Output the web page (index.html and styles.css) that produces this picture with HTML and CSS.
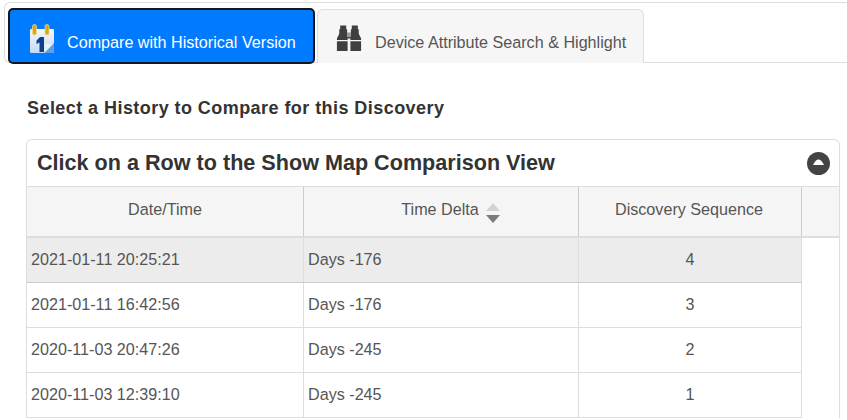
FILE: index.html
```html
<!DOCTYPE html>
<html lang="en">
<head>
<meta charset="utf-8">
<title>Compare with Historical Version</title>
<link rel="stylesheet" href="styles.css">
</head>
<body>
<nav class="tabs">
  <a class="tab tab-active">
    <svg class="tab-icon" width="25" height="29" viewBox="0 0 25 29">
      <defs>
        <linearGradient id="cal" x1="0" y1="0" x2="0" y2="1"><stop offset="0" stop-color="#f4f8fd"/><stop offset="1" stop-color="#c4daf2"/></linearGradient>
      </defs>
      <rect x="1" y="5" width="24" height="24" rx="1" fill="url(#cal)"/>
      <path d="M15 29 L25 19 V28 A1 1 0 0 1 24 29 Z" fill="#5d9fe0"/>
      <path d="M15.500 20 H24 L15.500 28.500 Z" fill="#e6f1fb"/>
      <rect x="3.500" y="0.500" width="4" height="10.500" rx="2" fill="#d9a520" stroke="#f2d472" stroke-width=".8"/>
      <rect x="16" y="0.500" width="4" height="10.500" rx="2" fill="#d9a520" stroke="#f2d472" stroke-width=".8"/>
      <path d="M7.500 16.500 L11 13 H15 V28 H10.500 V18.500 L7.500 20 Z" fill="#0f3f8c"/>
    </svg>
    <span>Compare with Historical Version</span>
  </a>
  <a class="tab">
    <svg class="tab-icon" width="26" height="27" viewBox="0 0 28 28">
      <path d="M4.500 0 H11 V4 H12 V11.500 H16 V4 H17 V0 H23.500 V4 H24.500 V9 L27 14 V15.500 H15.500 V14 H12.500 V15.500 H1 V14 L3.500 9 V4 H4.500 Z" fill="#3f3f3f"/>
      <rect x="12" y="7.500" width="4" height="5" fill="#9a9a9a"/>
      <path d="M1 17 H12.500 V27.500 H1 Z M15.500 17 H27 V27.500 H15.500 Z" fill="#3f3f3f"/>
    </svg>
    <span>Device Attribute Search &amp; Highlight</span>
  </a>
</nav>

<main class="content">
  <h2 class="section-title">Select a History to Compare for this Discovery</h2>
  <section class="panel">
    <header class="panel-head">
      <h3 class="panel-title">Click on a Row to the Show Map Comparison View</h3>
      <svg class="collapse" width="23" height="23" viewBox="0 0 23 23">
        <circle cx="11.500" cy="11.500" r="11.500" fill="#444"/>
        <path d="M6 13 C7.500 9.500 9.500 7.500 11.500 7.500 C13.500 7.500 15.500 9.500 17 13 Z" fill="#fff"/>
      </svg>
    </header>
    <div class="grid grid-head">
      <div class="th">Date/Time</div>
      <div class="th th-sort">Time Delta
        <svg class="sort" width="14" height="20" viewBox="0 0 14 20">
          <path d="M7 0 L14 8 H0 Z" fill="#d2d2d2"/>
          <path d="M0 12 H14 L7 20 Z" fill="#7a7a7a"/>
        </svg>
      </div>
      <div class="th th-seq">Discovery Sequence</div>
      <div class="th th-spacer"></div>
    </div>
    <div class="grid grid-row selected">
      <div class="td">2021-01-11 20:25:21</div><div class="td">Days -176</div><div class="td td-num">4</div>
    </div>
    <div class="grid grid-row">
      <div class="td">2021-01-11 16:42:56</div><div class="td">Days -176</div><div class="td td-num">3</div>
    </div>
    <div class="grid grid-row">
      <div class="td">2020-11-03 20:47:26</div><div class="td">Days -245</div><div class="td td-num">2</div>
    </div>
    <div class="grid grid-row">
      <div class="td">2020-11-03 12:39:10</div><div class="td">Days -245</div><div class="td td-num">1</div>
    </div>
  </section>
</main>
</body>
</html>
```
FILE: styles.css
```css
* { box-sizing: border-box; }
html, body { margin: 0; padding: 0; height: 420px; overflow: hidden; background: #fff; }
body { font-family: "Liberation Sans", Arial, sans-serif; color: #333; font-size: 16.15px; }

.tabs {
  display: flex;
  align-items: flex-start;
  gap: 2px;
  height: 61px;
  margin: 2px 0 0 4px;
  padding: 6px 0 0 3px;
  border: 1px solid #ddd;
  border-right: 0;
  border-radius: 6px 0 0 6px;
}
.tab {
  display: flex;
  align-items: flex-start;
  width: 327px;
  height: 54px;
  padding: 15px 0 0 18px;
  border: 1px solid #ddd;
  border-bottom: 0;
  border-radius: 6px 6px 0 0;
  background: #f6f6f6;
  color: #555;
}
.tab span { margin-top: 8px; white-space: nowrap; }
.tab-icon { flex: none; margin-right: 13px; }
.tab-active {
  width: 307px;
  height: 56px;
  margin-top: -1px;
  padding: 14px 0 0 19px;
  background: #007bff;
  border: 2px solid #14161c;
  border-radius: 5px;
  color: #fff;
}
.tab-active span { margin-top: 9px; }

.content { padding: 0 7px 0 26px; }
.section-title {
  margin: 0;
  padding: 34px 0 0 1px;
  font-size: 18px;
  letter-spacing: .44px;
  line-height: 22px;
  font-weight: 700;
  color: #333;
}
.panel {
  margin-top: 20px;
  border: 1px solid #ddd;
  border-bottom: 0;
  border-radius: 6px 6px 0 0;
  background: #fff;
}
.panel-head {
  display: flex;
  align-items: center;
  justify-content: space-between;
  height: 47px;
  padding: 0 9px 0 10px;
  border-bottom: 1px solid #ddd;
}
.panel-title { margin: 0; font-size: 21.6px; font-weight: 700; color: #333; }
.collapse { flex: none; }

.grid { display: grid; grid-template-columns: 277px 275px 223px; }
.grid-head {
  grid-template-columns: 277px 275px 223px 1fr;
  height: 51px;
  background: #f5f5f5;
  border-bottom: 2px solid #ddd;
}
.th {
  display: flex;
  align-items: center;
  justify-content: center;
  gap: 7px;
  padding-bottom: 4px;
  height: 49px;
  color: #555;
  border-right: 1px solid #ccc;
}
.th-sort { padding-left: 19px; }
.th-seq { padding-right: 2px; }
.th-spacer { border-right: 0; }
.sort { flex: none; margin-top: 6px; }
.grid-row { height: 45px; width: 775px; border-bottom: 1px solid #ddd; }
.selected { background: #ececec; border-bottom-color: #ccc; }
.td {
  display: flex;
  align-items: center;
  padding: 0 0 2px 4px;
  color: #555;
  border-right: 1px solid #ddd;
}
.td-num { justify-content: center; padding-left: 0; }
```
